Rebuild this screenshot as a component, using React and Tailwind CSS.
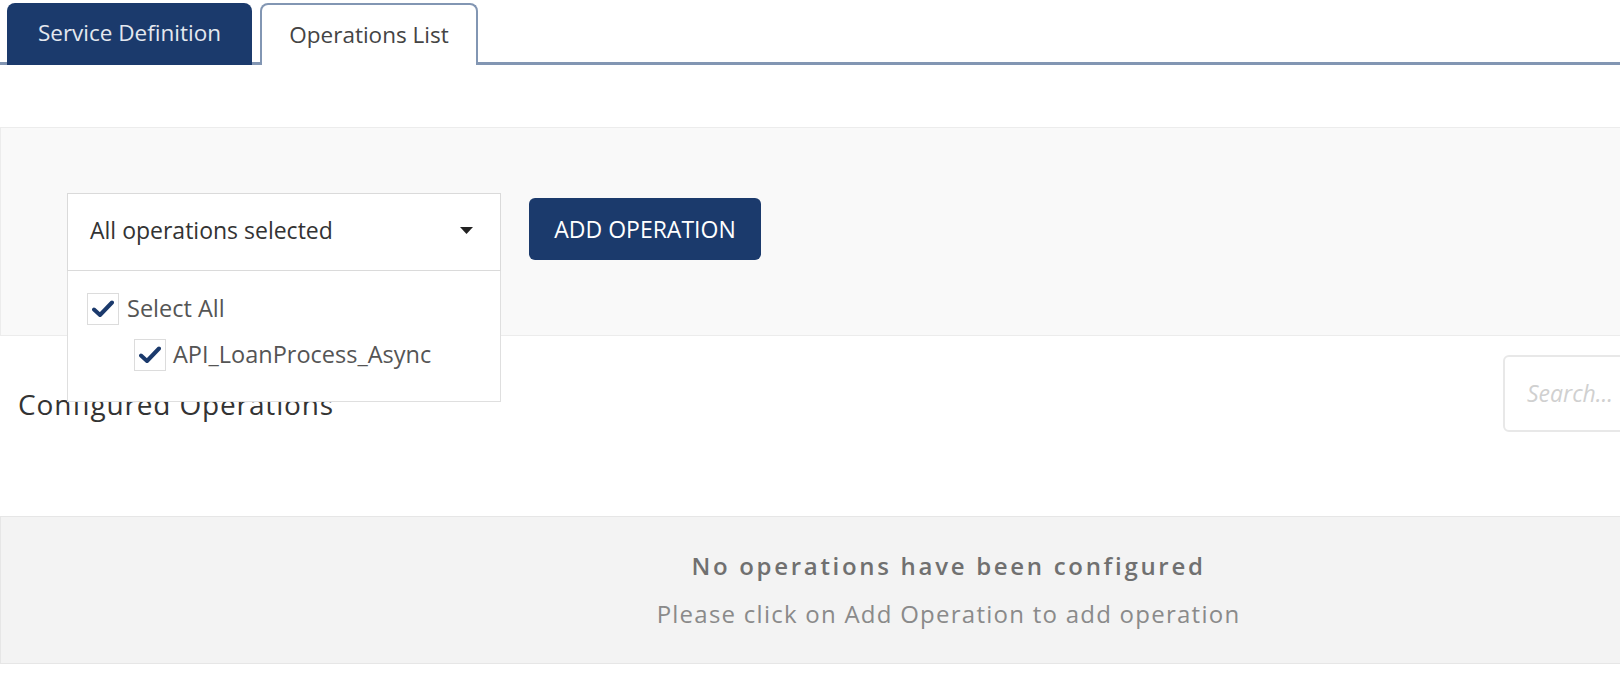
import React from "react";

function Check() {
  return (
    <svg width="22" height="18" viewBox="0 0 22 18" className="block">
      <path d="M2 9.5 L8 15 L20 2.5" fill="none" stroke="#1b3a6c" strokeWidth="4" strokeLinecap="round" strokeLinejoin="round" />
    </svg>
  );
}

function Box() {
  return (
    <div className="w-[32px] h-[32px] border border-[#dcdcdc] bg-white flex items-center justify-center">
      <Check />
    </div>
  );
}

export default function App() {
  return (
    <div className="w-[1620px] h-[700px] bg-white overflow-hidden text-[#333]" style={{ fontFamily: "'Open Sans', 'Liberation Sans', sans-serif" }}>
      {/* Tabs */}
      <div className="h-[65px] border-b-[3px] border-[#8296b3] flex items-end gap-[8px] pl-[7px]">
        <div className="w-[245px] h-[62px] bg-[#1b3a6c] rounded-t-[8px] flex items-center justify-center text-[22.5px] text-[#e4e8ef] mb-[-3px] pb-[3px]">
          Service Definition
        </div>
        <div className="w-[218px] h-[62px] bg-white border-2 border-b-0 border-[#8296b3] rounded-t-[8px] flex items-center justify-center text-[22.5px] text-[#444] mb-[-3px] pb-[1px]">
          Operations List
        </div>
      </div>

      {/* Panel */}
      <div className="mt-[62px] h-[209px] bg-[#f9f9f9] border-t border-l border-b border-[#ececec] pt-[65px] pl-[66px] flex items-start gap-[28px]">
        <div className="relative">
          <div className="w-[434px] h-[78px] bg-white border border-[#dadada] flex items-center justify-between pl-[22px] pr-[27px] pb-[3px] text-[23px] text-[#333]">
            <span>All operations selected</span>
            <svg width="13" height="8" viewBox="0 0 13 8"><path d="M0 0 H13 L6.5 7 Z" fill="#222" /></svg>
          </div>
          <div className="absolute left-0 top-[78px] w-[434px] h-[131px] bg-white border border-t-0 border-[#dfdfdf] z-10 pt-[20px] pl-[19px]">
            <div className="flex items-center gap-[8px] text-[23.5px] text-[#555]">
              <Box />
              <span>Select All</span>
            </div>
            <div className="flex items-center gap-[7px] text-[23.5px] text-[#555] mt-[11px] pl-[47px]">
              <Box />
              <span>API_LoanProcess_Async</span>
            </div>
          </div>
        </div>
        <button className="mt-[5px] w-[232px] h-[62px] bg-[#1b3a6c] rounded-[6px] text-white text-[23px] flex items-center justify-center">
          ADD OPERATION
        </button>
      </div>

      {/* Configured header */}
      <div className="flex items-start justify-between mt-[19px]">
        <div className="pl-[18px] pt-[28px] text-[28px] tracking-[0.85px] text-[#333]">Configured Operations</div>
        <div className="w-[200px] h-[77px] mr-[-83px] border-2 border-[#e8e8e8] rounded-[6px] flex items-center pl-[22px] text-[23px] italic text-[#d0d0d0]">
          Search...
        </div>
      </div>

      {/* Empty state */}
      <div className="mt-[84px] h-[148px] bg-[#f3f3f3] border-t border-b border-l border-[#e6e6e6] flex flex-col items-center justify-center pl-[276px]">
        <div className="text-[24px] font-semibold text-[#707070] tracking-[2.7px]">No operations have been configured</div>
        <div className="text-[24px] text-[#8a8a8a] tracking-[1.25px] mt-[12px]">Please click on Add Operation to add operation</div>
      </div>
    </div>
  );
}
